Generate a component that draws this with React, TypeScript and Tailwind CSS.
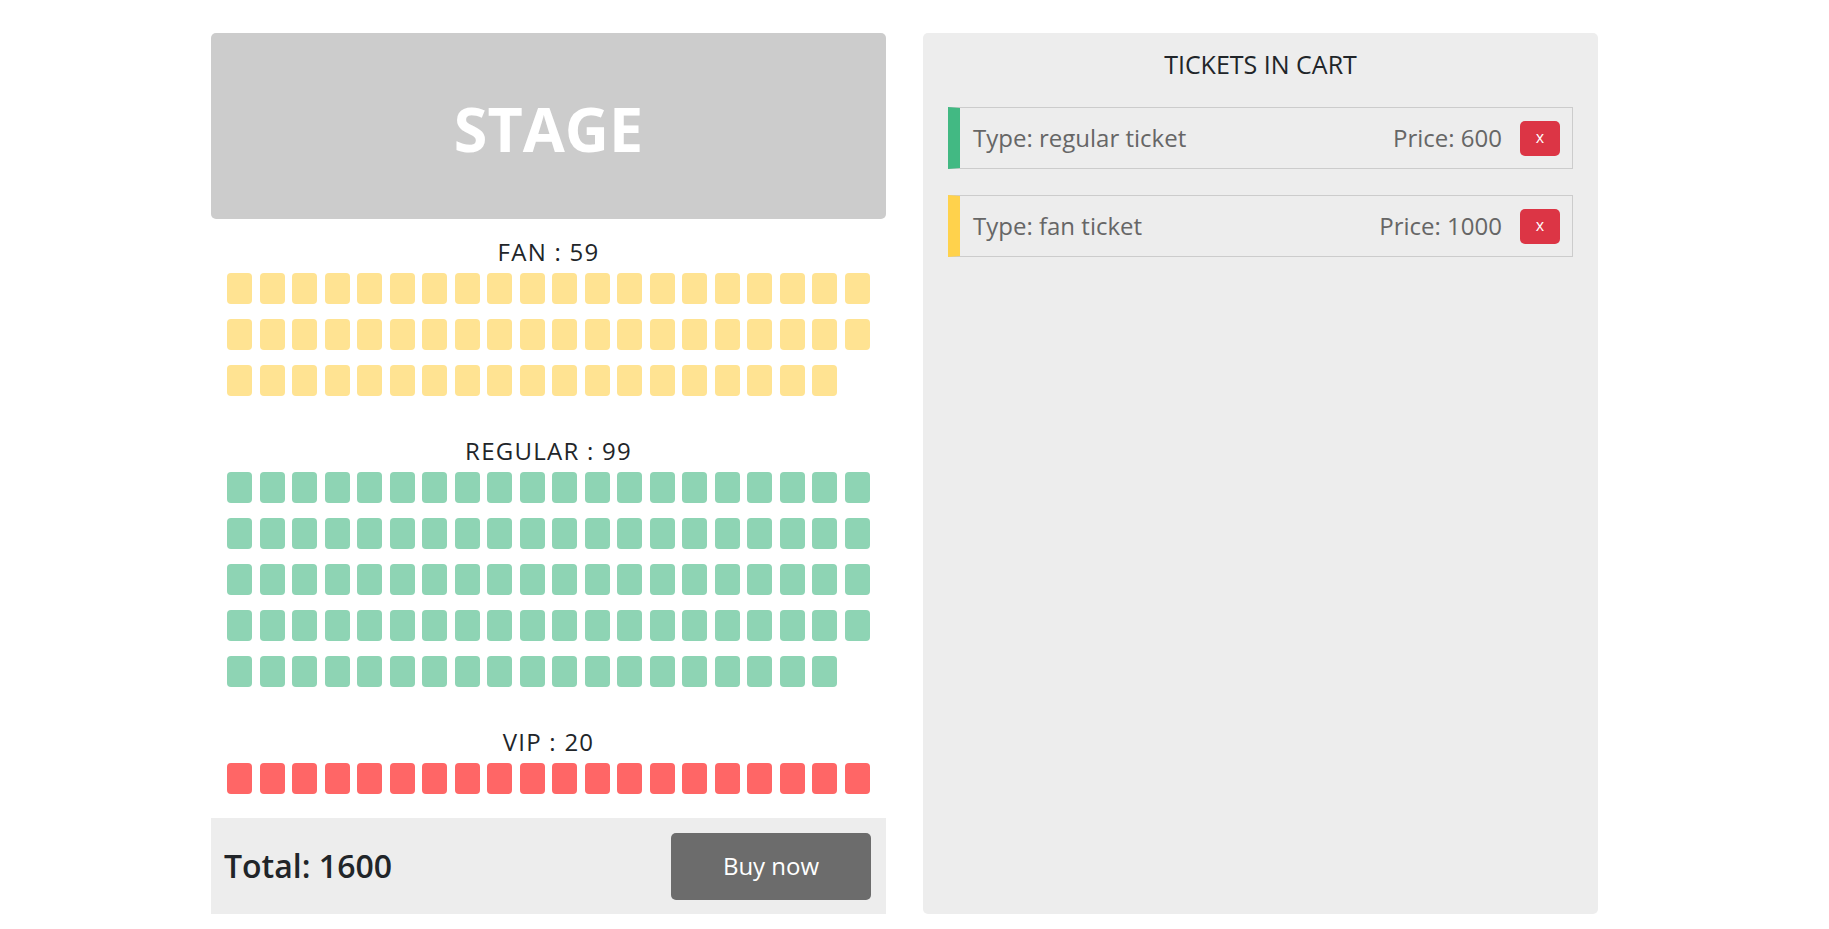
import React from 'react';

type Section = { name: string; count: number; color: string };

const sections: Section[] = [
  { name: 'FAN', count: 59, color: 'bg-[#ffe392]' },
  { name: 'REGULAR', count: 99, color: 'bg-[#8ed4b4]' },
  { name: 'VIP', count: 20, color: 'bg-[#ff6666]' },
];

const cart = [
  { type: 'regular', price: 600, bar: 'border-l-[#42b983]' },
  { type: 'fan', price: 1000, bar: 'border-l-[#ffd24c]' },
];

function SeatBlock({ section, first }: { section: Section; first: boolean }) {
  return (
    <div className={first ? 'mt-[18px]' : 'mt-[40px]'}>
      <p className="text-center text-[24px] leading-[30px] tracking-[1.25px] text-[#212529]">
        {section.name} : {section.count}
      </p>
      <div className="mt-[6px] grid grid-cols-[repeat(20,25px)] justify-center gap-x-[7.5px] gap-y-[15px]">
        {Array.from({ length: section.count }).map((_, i) => (
          <div key={i} className={`h-[31px] w-[25px] rounded-[4px] ${section.color}`} />
        ))}
      </div>
    </div>
  );
}

export default function App() {
  return (
    <div className="bg-white font-['Open_Sans',sans-serif] flex items-stretch gap-[37px] pl-[211px] pt-[33px] pb-[14px]">
      {/* Seat map */}
      <div className="w-[675px] flex flex-col">
        <div className="h-[186px] rounded-[5px] bg-[#cccccc] flex items-center justify-center pt-[5px]">
          <span className="text-[61px] font-bold text-white leading-none">STAGE</span>
        </div>

        {sections.map((s, i) => (
          <SeatBlock key={s.name} section={s} first={i === 0} />
        ))}

        <div className="mt-[24px] h-[96px] bg-[#ededed] flex items-center justify-between pl-[13px] pr-[15px]">
          <span className="text-[32px] font-semibold text-[#212529]">Total: 1600</span>
          <button className="w-[200px] h-[67px] rounded-[5px] bg-[#6c6c6c] text-white text-[24px]">
            Buy now
          </button>
        </div>
      </div>

      {/* Cart */}
      <div className="w-[675px] rounded-[5px] bg-[#ededed] px-[25px] pt-[16px]">
        <h2 className="text-center text-[25px] leading-[30px] text-[#212529]">TICKETS IN CART</h2>
        <div className="mt-[28px] flex flex-col gap-[26px]">
          {cart.map((item) => (
            <div
              key={item.type}
              className={`h-[62px] flex items-center border border-[#cccccc] border-l-[12px] ${item.bar} pl-[13px] pr-[12px]`}
            >
              <span className="flex-1 text-[24px] text-[#666666]">Type: {item.type} ticket</span>
              <span className="text-[24px] text-[#666666]">Price: {item.price}</span>
              <button className="ml-[18px] w-[40px] h-[35px] rounded-[5px] bg-[#dc3545] text-white text-[16px] leading-none pb-[2px]">
                x
              </button>
            </div>
          ))}
        </div>
      </div>
    </div>
  );
}
